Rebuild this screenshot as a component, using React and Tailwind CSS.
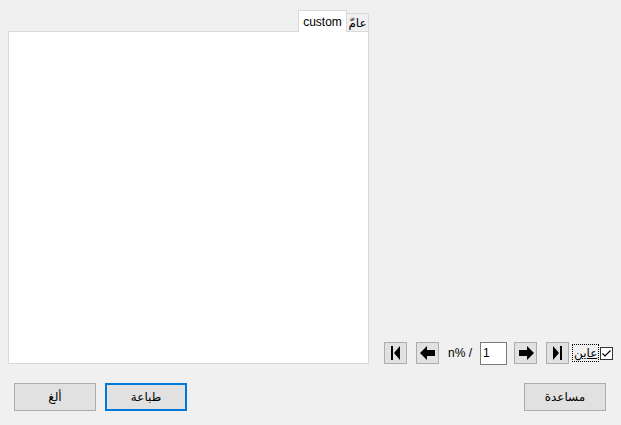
const font = { fontFamily: '"Liberation Sans", "DejaVu Sans", sans-serif' };

const NavButton = ({ children }) => (
  <button className="w-[23px] h-[22px] bg-[#e1e1e1] border border-[#adadad] flex items-center justify-center">
    {children}
  </button>
);

const App = () => {
  return (
    <div
      className="w-[621px] h-[425px] bg-[#f0f0f0] flex flex-col text-[12px] text-black overflow-hidden"
      style={font}
    >
      {/* Top area: tab control + navigation */}
      <div className="flex pt-[10px] pl-[8px]">
        <div className="w-[361px] flex flex-col">
          <div className="flex justify-end h-[21px] items-end">
            <div className="relative z-10 w-[49px] h-[22px] -mb-[1px] bg-white border border-[#d9d9d9] border-b-0 flex items-start justify-center pt-[2px]">
              custom
            </div>
            <div className="w-[23px] h-[18px] -ml-[1px] bg-[#f0f0f0] border border-[#d9d9d9] border-b-0 flex items-center justify-center leading-none">
              عامّ
            </div>
          </div>
          <div className="h-[333px] bg-white border border-[#d9d9d9]" />
        </div>

        <div className="flex items-end pl-[15px] pb-[0px]">
          <div className="flex items-center h-[22px]">
            <NavButton>
              <svg width="11" height="14" viewBox="0 0 11 14">
                <rect x="1" y="0" width="2" height="14" fill="#000" />
                <polygon points="10,0 10,14 4,7" fill="#000" />
              </svg>
            </NavButton>
            <div className="w-[9px]" />
            <NavButton>
              <svg width="16" height="14" viewBox="0 0 16 14">
                <polygon points="0,7 7,0 7,4 15,4 15,10 7,10 7,14" fill="#000" />
              </svg>
            </NavButton>
            <span className="ml-[9px] w-[32px] text-[#000]">n% /</span>
            <div className="w-[27px] h-[23px] bg-white border border-[#7a7a7a] flex items-center pl-[2px]">1</div>
            <div className="w-[7px]" />
            <NavButton>
              <svg width="16" height="14" viewBox="0 0 16 14">
                <polygon points="16,7 9,0 9,4 1,4 1,10 9,10 9,14" fill="#000" />
              </svg>
            </NavButton>
            <div className="w-[9px]" />
            <NavButton>
              <svg width="11" height="14" viewBox="0 0 11 14">
                <polygon points="1,0 1,14 7,7" fill="#000" />
                <rect x="8" y="0" width="2" height="14" fill="#000" />
              </svg>
            </NavButton>
            <span className="ml-[3px] h-[18px] px-[1px] border border-dotted border-black flex items-center leading-none">
              <span className="underline">عاين</span>
            </span>
            <span className="ml-[1px] w-[13px] h-[13px] border border-[#333] bg-white flex items-center justify-center">
              <svg width="11" height="11" viewBox="0 0 11 11">
                <polyline points="1.5,5.5 4,8 9.5,2.5" fill="none" stroke="#000" strokeWidth="1.2" />
              </svg>
            </span>
          </div>
        </div>
      </div>

      {/* Bottom buttons */}
      <div className="flex items-center pt-[19px] pl-[14px] pr-[15px]">
        <button className="w-[82px] h-[28px] bg-[#e1e1e1] border border-[#adadad]">ألغ</button>
        <button className="ml-[9px] w-[82px] h-[28px] bg-[#e1e1e1] border-2 border-[#0078d7]">طباعة</button>
        <div className="flex-1" />
        <button className="w-[82px] h-[28px] bg-[#e1e1e1] border border-[#adadad]">مساعدة</button>
      </div>
    </div>
  );
};

export default App;
